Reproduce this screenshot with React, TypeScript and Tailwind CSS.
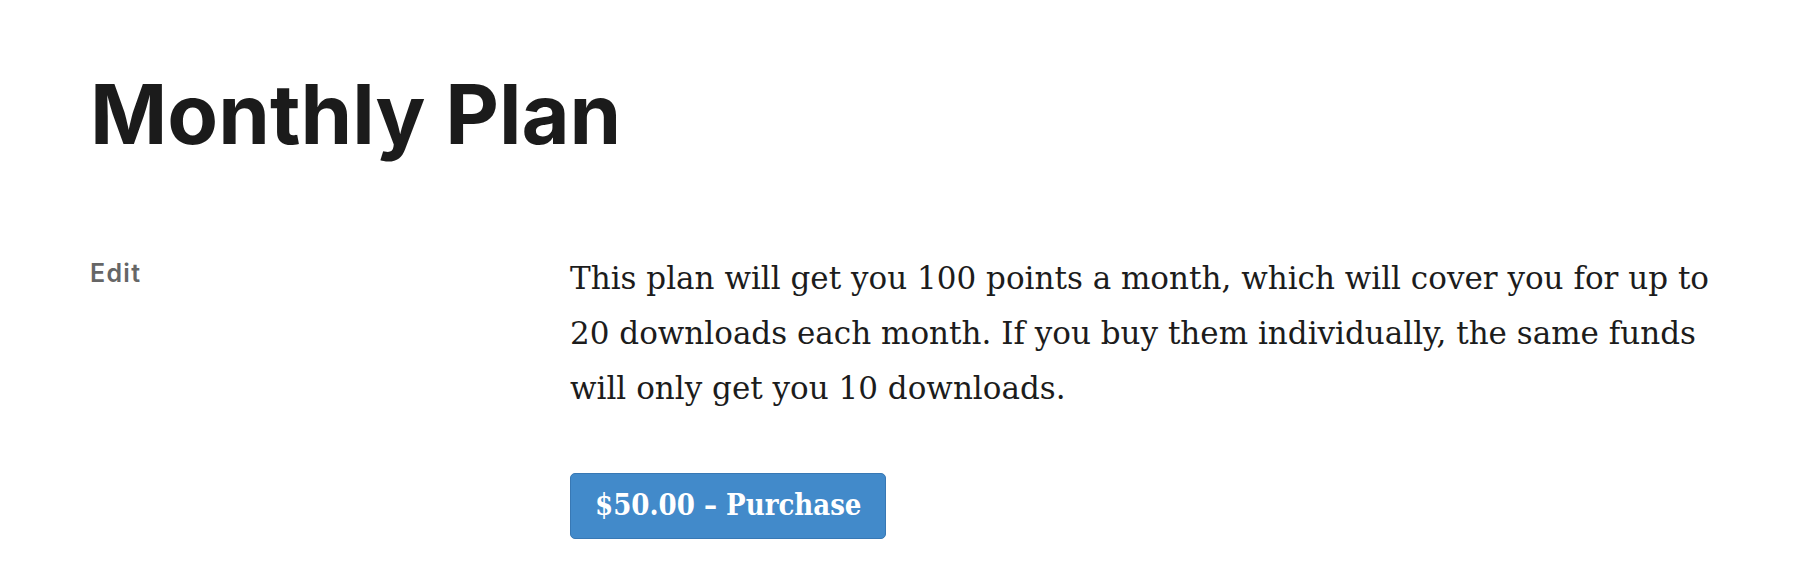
export default function App() {
  return (
    <div className="min-h-[568px] w-[1810px] bg-white pl-[90px] pt-[73px]">
      <h1 className="text-[83px] font-bold leading-none text-[#1b1b1b] [font-family:Inter,'Liberation_Sans',sans-serif]">
        Monthly Plan
      </h1>

      <div className="mt-[95px] flex">
        <div className="w-[480px] shrink-0 pt-[10px]">
          <a className="text-[25px] font-semibold leading-none tracking-[1.3px] text-[#666] [font-family:Inter,'Liberation_Sans',sans-serif]">
            Edit
          </a>
        </div>

        <div className="w-[1172px] [font-family:'DejaVu_Serif',serif]">
          <p className="text-[31px] leading-[55px] text-[#1c1c1c]">
            This plan will get you 100 points a month, which will cover you for up to 20 downloads each month. If you
            buy them individually, the same funds will only get you 10 downloads.
          </p>
          <button className="mt-[57px] flex h-[66px] items-center rounded-[5px] border border-[#3878b4] bg-[#428aca] px-[24px] text-[29px] font-bold text-white [font-family:'DejaVu_Serif_Condensed','DejaVu_Serif',serif]">
            $50.00 – Purchase
          </button>
        </div>
      </div>
    </div>
  );
}
